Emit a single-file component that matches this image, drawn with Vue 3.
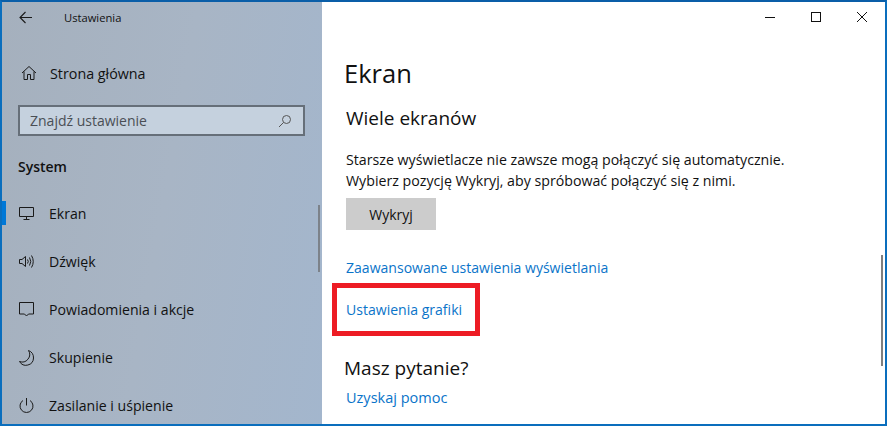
<template>
  <div class="window">
    <aside class="sidebar">
      <div class="titlebar">
        <svg class="back" width="14" height="14" viewBox="0 0 14 14">
          <path d="M13 7.500H1.500M6.500 2 1 7.500 6.500 13" fill="none" stroke="#1a1a1a" stroke-width="1.100" />
        </svg>
        <span class="app-title">Ustawienia</span>
      </div>

      <div class="home">
        <svg width="16" height="16" viewBox="0 0 16 16">
          <path d="M1 8 8 1.500 15 8M3 6.500V14.500H6.500V9.500H9.500V14.500H13V6.500" fill="none" stroke="#1a1a1a" stroke-width="1" />
        </svg>
        <span>Strona główna</span>
      </div>

      <div class="search">
        <span>Znajdź ustawienie</span>
        <svg width="14" height="14" viewBox="0 0 14 14">
          <circle cx="8.500" cy="5.500" r="4" fill="none" stroke="#555" stroke-width="1" />
          <path d="M5.500 8.500 1 13" stroke="#555" stroke-width="1" />
        </svg>
      </div>

      <div class="section">System</div>

      <nav class="nav">
        <div v-for="item in items" :key="item.label" class="nav-row" :class="{ active: item.active }">
          <svg width="17" height="17" viewBox="0 0 17 17">
            <path v-for="d in item.icon" :key="d" :d="d" fill="none" stroke="#1a1a1a" stroke-width="1" />
          </svg>
          <span>{{ item.label }}</span>
        </div>
      </nav>
      <div class="side-scroll"></div>
    </aside>

    <main class="content">
      <div class="controls">
        <svg width="10" height="10" viewBox="0 0 10 10"><path d="M0 5.500H10" stroke="#111" stroke-width="1" /></svg>
        <svg width="10" height="10" viewBox="0 0 10 10"><rect x="0.500" y="0.500" width="9" height="9" fill="none" stroke="#111" stroke-width="1" /></svg>
        <svg width="10" height="10" viewBox="0 0 10 10"><path d="M0 0 10 10M10 0 0 10" stroke="#111" stroke-width="1" /></svg>
      </div>

      <h1>Ekran</h1>
      <h2 class="multi">Wiele ekranów</h2>
      <p>Starsze wyświetlacze nie zawsze mogą połączyć się automatycznie.<br />Wybierz pozycję Wykryj, aby spróbować połączyć się z nimi.</p>
      <button class="detect">Wykryj</button>
      <a class="link advanced">Zaawansowane ustawienia wyświetlania</a>
      <div class="highlight"><a class="link">Ustawienia grafiki</a></div>
      <h2 class="question">Masz pytanie?</h2>
      <a class="link help">Uzyskaj pomoc</a>
      <div class="main-scroll"></div>
    </main>
  </div>
</template>

<script setup>
const items = [
  {
    label: 'Ekran',
    active: true,
    icon: ['M1.500 2.500H15.500V11.500H1.500Z', 'M8.500 11.500V14M5.500 14.500H11.500']
  },
  {
    label: 'Dźwięk',
    icon: ['M1.500 6.500H4L7.500 3.500V13.500L4 10.500H1.500Z', 'M9.500 6.500Q11 8.500 9.500 10.500', 'M11.500 4.500Q14 8.500 11.500 12.500', 'M13.500 2.500Q17 8.500 13.500 14.500']
  },
  {
    label: 'Powiadomienia i akcje',
    icon: ['M1.500 1.500H15.500V13H10.500L8.500 15 6.500 13H1.500Z']
  },
  {
    label: 'Skupienie',
    icon: ['M10.500 1.500A7.500 7.500 0 0 1 1.500 12.500 7.500 7.500 0 0 0 15.500 9 7.800 7.800 0 0 0 10.500 1.500Z']
  },
  {
    label: 'Zasilanie i uśpienie',
    icon: ['M8.500 1V8.500', 'M5 3.500A6.500 6.500 0 1 0 12 3.500']
  }
]
</script>

<style>
html,
body {
  margin: 0;
  background: #fff;
  overflow: hidden;
}
</style>

<style scoped>
.window {
  position: relative;
  display: flex;
  width: 887px;
  height: 426px;
  box-sizing: border-box;
  border: 2px solid #0a6ebd;
  border-top-color: #0a5ea8;
  font-family: "Open Sans", "Noto Sans", sans-serif;
  color: #111;
  overflow: hidden;
}

.sidebar {
  position: relative;
  width: 320px;
  flex: none;
  background: linear-gradient(100deg, #a5b0bd 0%, #a8b5c5 50%, #a3b6cd 100%);
}

.titlebar {
  display: flex;
  align-items: center;
  height: 30px;
  padding-left: 17px;
}

.back {
  margin-right: 31px;
}

.app-title {
  font-size: 11.200px;
}

.home {
  display: flex;
  align-items: center;
  gap: 13px;
  height: 30px;
  margin-top: 26px;
  padding-left: 19px;
  font-size: 14.300px;
}

.search {
  display: flex;
  align-items: center;
  justify-content: space-between;
  box-sizing: border-box;
  width: 287px;
  height: 31px;
  margin: 17px 0 0 16px;
  padding: 0 11px 0 10px;
  border: 2px solid #666f79;
  background: #c5d1de;
  color: #4a4f55;
  font-size: 14px;
}

.section {
  margin: 19px 0 0 16px;
  line-height: 24px;
  font-size: 14px;
  font-weight: 600;
}

.nav {
  margin-top: 10px;
}

.nav-row {
  display: flex;
  align-items: center;
  gap: 14px;
  height: 48px;
  padding-left: 16px;
  font-size: 14.100px;
}

.nav-row.active {
  position: relative;
}

.nav-row.active::before {
  content: "";
  position: absolute;
  left: 0;
  top: 12px;
  width: 4px;
  height: 24px;
  background: #0078d7;
}

.side-scroll {
  position: absolute;
  right: 2px;
  top: 203px;
  width: 2px;
  height: 67px;
  background: #7c828a;
}

.content {
  position: relative;
  flex: 1;
  padding-left: 22px;
  background: #fff;
}

.controls {
  position: absolute;
  top: 10px;
  right: 18px;
  display: flex;
  gap: 36px;
}

h1 {
  margin: 51px 0 0;
  font-size: 25.500px;
  font-weight: 400;
  line-height: 40px;
}

h2 {
  margin: 0;
  font-size: 19px;
  font-weight: 400;
  line-height: 28px;
}

.multi {
  margin: 11px 0 0 2px;
}

p {
  margin: 17px 0 0 2px;
  font-size: 14.200px;
  line-height: 21px;
}

.detect {
  display: block;
  width: 90px;
  height: 32px;
  margin: 7px 0 0 2px;
  border: 0;
  background: #ccc;
  color: #111;
  font: inherit;
  font-size: 14px;
}

.link {
  display: block;
  color: #0a74c9;
  font-size: 14.050px;
  line-height: 20px;
}

.advanced {
  margin: 28px 0 0 2px;
}

.highlight {
  box-sizing: border-box;
  width: 148px;
  height: 53px;
  margin: 5px 0 0 -12px;
  padding: 12px 0 0 9px;
  border: 5px solid #ed1c24;
}

.question {
  margin-top: 18px;
}

.help {
  margin: 6px 0 0 2px;
  font-size: 14.500px;
}

.main-scroll {
  position: absolute;
  right: 2px;
  top: 253px;
  width: 2px;
  height: 111px;
  background: #7f7f7f;
}
</style>
